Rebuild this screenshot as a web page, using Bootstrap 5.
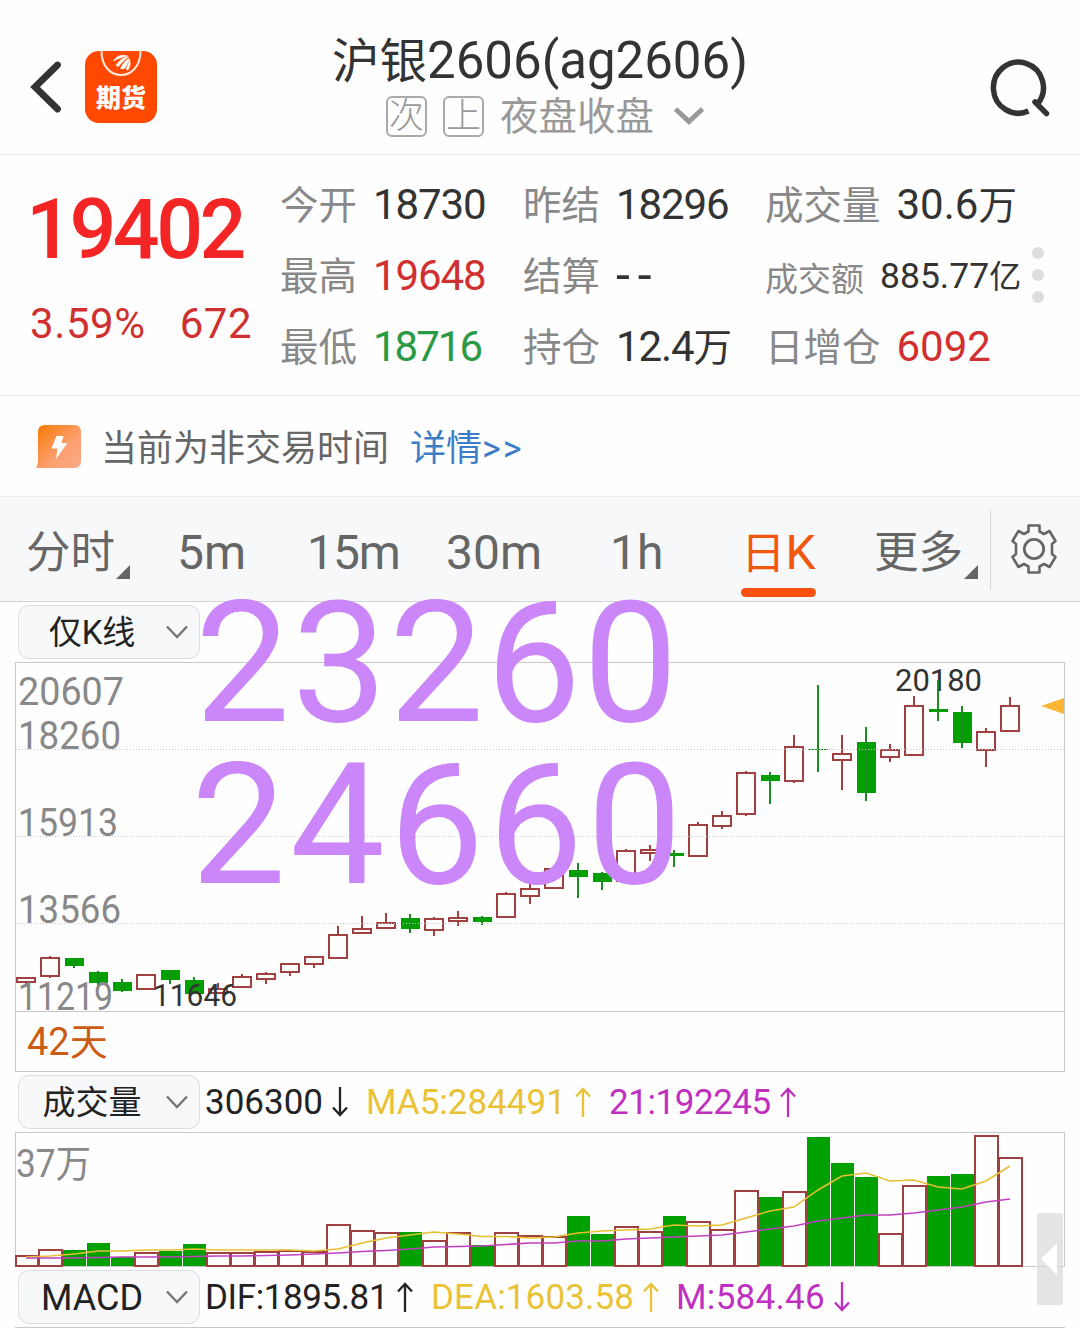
<!DOCTYPE html>
<html lang="zh-CN">
<head>
<meta charset="utf-8">
<meta name="viewport" content="width=device-width, initial-scale=1">
<title>沪银2606(ag2606)</title>
<link rel="stylesheet" href="https://cdn.jsdelivr.net/npm/bootstrap@5.3.0/dist/css/bootstrap.min.css">
<style>
body{font-family:Roboto,"Noto Sans CJK SC",sans-serif;color:#333;background:#fefefe;width:1080px;height:1328px;overflow:hidden;line-height:1}
svg{display:block;flex:none;overflow:visible}
.topbar{height:155px;border-bottom:1px solid #ebebeb}
.side-l{width:200px;padding:51px 0 0 28px}
.side-r{width:200px;padding:57px 29px 0 0}
.ttl{font-size:51px;line-height:60px;height:60px;margin-top:31px}
.ttl .zh{font-size:47.5px}
.substat{color:#999;font-size:38.5px;height:44px;margin-top:3px;padding-left:10px}
.substat .word{padding-top:3px}
.tagbox{width:41px;height:41px;border:2px solid #aaa;border-radius:6px;font-size:35px;font-weight:300}
.quote{height:241px;border-bottom:1px solid #ebebeb}
.pricecol{width:280px;padding:38px 0 0 26px}
.price{font-size:82.5px;font-weight:500;color:#f32525;line-height:74px;letter-spacing:-3.5px}
.chg{font-size:42px;color:#d03030;margin:36px 0 0 4px;line-height:42px;gap:34px;letter-spacing:.6px}
.stats{display:grid;grid-template-columns:243px 242px 255px;grid-template-rows:71px 71px 71px;padding-top:14px}
.stat{gap:16px;font-size:42px;white-space:nowrap}
.lb{color:#888;font-size:38.5px;padding-top:4px}
.stat .zh{font-size:38.5px}
.narrow{letter-spacing:-1.1px}
.narrower{letter-spacing:-2px}
.dash{font-size:50px;letter-spacing:8px;padding-bottom:2px}
.stat.tight{font-size:35.5px;padding-top:3px}
.stat.tight .lb,.stat.tight .zh{font-size:33px}
.stat.tight .zh{font-size:32px}
.up{color:#d03030}.down{color:#2c9a45}
.dots{width:12px;padding-top:92px;gap:10px;margin-left:12px}
.dots i{width:12px;height:12px;border-radius:50%;background:#ddd}
.notice{height:100px;padding-left:36px;font-size:36px;color:#666}
.notice .msg{margin-left:20px;padding-top:5px}
.notice a{color:#3d7dc8;text-decoration:none;margin-left:21px;padding-top:5px}
.notice .gt{letter-spacing:2px}
.tabs{height:106px;background:#f7f8fa;border-top:1px solid #e8eaec;border-bottom:1px solid #d2d5d8;color:#666;font-size:48px}
.tabgrid{display:grid;grid-template-columns:151px 130px 139px 164px 132px 132px 115px;padding-left:26px;width:990px;line-height:56px;padding-top:28px}
.tabgrid .zh{font-size:44.5px}
.tabgrid>div{white-space:nowrap;height:72px}
.tri{width:0;height:0;border-left:14px solid transparent;border-bottom:14px solid #666;align-self:flex-end;margin:0 0 18px 1px}
.on{color:#f2560f}
.on::after{content:"";display:block;width:75px;height:9px;border-radius:5px;background:#fa5010;margin:6px 0 0 -1px}
.vline{width:1px;height:81px;background:#d5d7da;margin-top:12px}
.gear{margin:27px 0 0 19px}
.indi{height:60px;padding-left:18px;font-size:35px;color:#222;gap:5px}
.pick{width:182px;height:54px;border:1px solid #d9dce0;border-radius:11px;background:#f7f8fa;color:#222}
.pick span{width:146px;text-align:center;font-size:33px;padding-top:1px}
.pick .latin{font-size:36px}
.indi .val{gap:9px;white-space:nowrap}
.c-y{color:#e9c236}.c-m{color:#c030c0}
.frame{margin-left:15px;width:1050px;border:1px solid #c8c8c8;border-bottom:0}
.days{height:60px;color:#cc5c14;font-size:38px;padding-left:11px;border-bottom:1px solid #c8c8c8}
.overlay{position:absolute;left:0;top:580px;z-index:3;pointer-events:none}
.handle{position:absolute;left:1037px;top:1213px;z-index:4}
</style>
<script src="https://cdn.jsdelivr.net/npm/bootstrap@5.3.0/dist/js/bootstrap.bundle.min.js"></script>
</head>
<body class="position-relative">
<header class="topbar d-flex justify-content-between">
  <div class="side-l d-flex">
    <svg width="57" height="72" viewBox="28 51 57 72"><path d="M57.500 65L35 87L57.500 109" fill="none" stroke="#333" stroke-width="6.800" stroke-linecap="round"/></svg>
    <svg width="72" height="72" viewBox="0 0 72 72"><rect width="72" height="72" rx="14" fill="#ff4800"/><path d="M16.500 0c0 32 39 32 39 0" fill="none" stroke="#ffe9e0" stroke-width="2"/><path d="M28.500 10C31 5.500 36 3 42.500 5C36.500 6 32 8 28.500 10ZM31 14.500C34 9.500 38 6.500 43.500 6C39 9 36 12 33.500 15.500ZM35.500 17.500C37.500 13 40.500 9 44 7.500C43 12 41 15.500 39 18ZM41 18C43 14 44 11 44.300 8C46 12 45 16 43 19Z" fill="#fff" stroke="#fff" stroke-width=".6"/><text x="36" y="56" text-anchor="middle" font-size="25" font-weight="900" font-family="Noto Sans CJK SC,sans-serif" fill="#fff">期货</text></svg>
  </div>
  <div class="d-flex flex-column align-items-center">
    <div class="ttl text-nowrap"><span class="zh">沪银</span>2606(ag2606)</div>
    <div class="substat d-flex align-items-center">
      <span class="tagbox d-flex align-items-center justify-content-center">次</span>
      <span class="tagbox d-flex align-items-center justify-content-center ms-3 me-3">上</span>
      <span class="word">夜盘收盘</span>
      <svg style="margin-left:20px" width="30" height="20" viewBox="0 0 30 20"><path d="M1.500 3L15 15.500L28.500 3" fill="none" stroke="#999" stroke-width="5"/></svg>
    </div>
  </div>
  <div class="side-r d-flex justify-content-end">
    <svg width="60" height="62" viewBox="991 56.500 60 62"><path d="M1028.500 110.500A25 25.500 0 1 1 1038 103" fill="none" stroke="#333" stroke-width="5.500"/><path d="M1035 101.500L1046.500 113" stroke="#333" stroke-width="5.500" stroke-linecap="round"/></svg>
  </div>
</header>

<section class="quote d-flex">
  <div class="pricecol">
    <div class="price">19402</div>
    <div class="chg d-flex"><span>3.59%</span><span>672</span></div>
  </div>
  <div class="stats">
    <div class="stat d-flex align-items-center"><span class="lb">今开</span><span class="narrow">18730</span></div>
    <div class="stat d-flex align-items-center"><span class="lb">昨结</span><span class="narrow">18296</span></div>
    <div class="stat d-flex align-items-center"><span class="lb">成交量</span><span>30.6<span class="zh">万</span></span></div>
    <div class="stat d-flex align-items-center"><span class="lb">最高</span><span class="up narrow">19648</span></div>
    <div class="stat d-flex align-items-center"><span class="lb">结算</span><span class="dash">--</span></div>
    <div class="stat tight d-flex align-items-center"><span class="lb">成交额</span><span>885.77<span class="zh">亿</span></span></div>
    <div class="stat d-flex align-items-center"><span class="lb">最低</span><span class="down narrower">18716</span></div>
    <div class="stat d-flex align-items-center"><span class="lb">持仓</span><span class="narrow">12.4<span class="zh">万</span></span></div>
    <div class="stat d-flex align-items-center"><span class="lb">日增仓</span><span class="up">6092</span></div>
  </div>
  <div class="dots d-flex flex-column"><i></i><i></i><i></i></div>
</section>

<section class="notice d-flex align-items-center">
  <svg width="45" height="43" viewBox="0 0 45 43"><defs><linearGradient id="flash" x1="0" y1="0" x2="1" y2="1"><stop offset="0" stop-color="#f97800"/><stop offset=".6" stop-color="#fba070"/><stop offset="1" stop-color="#fba98a"/></linearGradient></defs><path d="M9 0H38Q45 0 45 7V36Q45 43 38 43H0Q2 40 2 34V7Q2 0 9 0Z" fill="url(#flash)"/><path d="M20.500 11H27.500L25.500 18H31.500L20 34L21.500 23.500H15.500Z" fill="#fff"/></svg>
  <span class="msg">当前为非交易时间</span><a href="#">详情<span class="gt">&gt;&gt;</span></a>
</section>

<nav class="tabs d-flex">
  <div class="tabgrid">
    <div class="d-flex"><span class="zh">分时</span><i class="tri"></i></div>
    <div>5m</div><div class="narrow">15m</div><div>30m</div><div>1h</div>
    <div class="on"><span class="zh" style="margin-left:-1px">日</span>K</div>
    <div class="d-flex"><span class="zh">更多</span><i class="tri"></i></div>
  </div>
  <div class="vline"></div>
  <svg class="gear" width="48" height="50" viewBox="-24 -25 48 50"><path d="M-5.500 -23.500H5.500V-17.500L10 -15L15.500 -18L21.500 -8L18 -5V5L21.500 8L15.500 18L10 15L5.500 17.500V23.500H-5.500V17.500L-10 15L-15.500 18L-21.500 8L-18 5V-5L-21.500 -8L-15.500 -18L-10 -15L-5.500 -17.500Z" fill="none" stroke="#666" stroke-width="2.600" stroke-linejoin="round"/><circle r="9.700" fill="none" stroke="#666" stroke-width="2.800"/></svg>
</nav>

<main>
  <div class="indi d-flex align-items-center">
    <div class="pick d-flex align-items-center"><span>仅K线</span><svg width="24" height="16" viewBox="0 0 24 16"><path d="M2 2.500L12 13L22 2.500" fill="none" stroke="#777" stroke-width="2.500"/></svg></div>
  </div>
  <div class="frame"><svg id="kline" width="1048" height="348" viewBox="16 663 1048 348"></svg></div>
  <div class="frame"><div class="days d-flex align-items-center">42天</div></div>
  <div class="indi d-flex align-items-center">
    <div class="pick d-flex align-items-center"><span>成交量</span><svg width="24" height="16" viewBox="0 0 24 16"><path d="M2 2.500L12 13L22 2.500" fill="none" stroke="#777" stroke-width="2.500"/></svg></div>
    <div class="val d-flex align-items-center" style="width:156px">306300<svg width="16" height="30" viewBox="0 0 16 30"><path d="M8 0V28M1 20.500L8 28L15 20.500" fill="none" stroke="currentColor" stroke-width="2.300"/></svg></div>
    <div class="val c-y d-flex align-items-center" style="width:238px">MA5:284491<svg width="16" height="30" viewBox="0 0 16 30"><path d="M8 30V2M1 9.500L8 2L15 9.500" fill="none" stroke="currentColor" stroke-width="2.300"/></svg></div>
    <div class="val c-m d-flex align-items-center" style="letter-spacing:-.45px">21:192245<svg width="16" height="30" viewBox="0 0 16 30"><path d="M8 30V2M1 9.500L8 2L15 9.500" fill="none" stroke="currentColor" stroke-width="2.300"/></svg></div>
  </div>
  <div class="frame"><svg id="volume" width="1048" height="134" viewBox="16 1133 1048 134"></svg></div>
  <div class="indi d-flex align-items-center">
    <div class="pick d-flex align-items-center"><span class="latin">MACD</span><svg width="24" height="16" viewBox="0 0 24 16"><path d="M2 2.500L12 13L22 2.500" fill="none" stroke="#777" stroke-width="2.500"/></svg></div>
    <div class="val d-flex align-items-center" style="width:221px;letter-spacing:-.4px">DIF:1895.81<svg width="16" height="30" viewBox="0 0 16 30"><path d="M8 30V2M1 9.500L8 2L15 9.500" fill="none" stroke="currentColor" stroke-width="2.300"/></svg></div>
    <div class="val c-y d-flex align-items-center" style="width:240px;letter-spacing:.15px">DEA:1603.58<svg width="16" height="30" viewBox="0 0 16 30"><path d="M8 30V2M1 9.500L8 2L15 9.500" fill="none" stroke="currentColor" stroke-width="2.300"/></svg></div>
    <div class="val c-m d-flex align-items-center" style="letter-spacing:.3px">M:584.46<svg width="16" height="30" viewBox="0 0 16 30"><path d="M8 0V28M1 20.500L8 28L15 20.500" fill="none" stroke="currentColor" stroke-width="2.300"/></svg></div>
  </div>
  <div class="frame"></div>
</main>

<svg class="overlay" width="720" height="320" viewBox="0 580 720 320" font-family="Roboto,sans-serif" font-size="169" font-weight="400" fill="#cb86f9">
  <text x="195" y="720.500" textLength="483">23260</text>
  <text x="191" y="882.500" textLength="491">24660</text>
</svg>
<svg class="handle" width="26" height="92" viewBox="0 0 26 92"><rect width="26" height="92" rx="2" fill="#d9d9d9" fill-opacity=".72"/><path d="M4 46L20 30V62Z" fill="#fff"/></svg>

<script>
const RED='#a04040',GREEN='#00a000';
// colour, body top, body bottom, wick high, wick low
const candles=[['r',977,983,977,985],['r',957,977,956,978],['g',958,966,958,968],['g',972,983,971,986],['g',982,991,979,992],['r',974,990,974,990],['g',970,980,970,984],['g',980,994,977,994],['r',988,994,983,994],['r',976,988,974,988],['r',973,980,972,984],['r',963,973,963,976],['r',956,965,956,968],['r',934,959,926,959],['r',928,934,916,934],['r',922,929,913,929],['g',918,929,914,933],['r',918,931,917,936],['r',917,922,911,926],['g',917,922,916,925],['r',893,918,892,918],['r',888,897,883,904],['r',868,889,868,889],['g',870,877,863,898],['g',873,882,872,890],['r',850,882,849,882],['r',849,854,845,861],['g',853,856,850,867],['r',824,857,822,857],['r',815,827,811,829],['r',772,815,771,816],['g',775,781,772,804],['r',746,782,735,783],['g',749,750,685,772],['r',753,761,735,790],['g',742,793,727,801],['r',749,758,744,762],['r',705,756,696,756],['g',709,712,680,721],['g',712,743,706,748],['r',731,751,728,767],['r',705,732,697,732]];
const label=(x,y,t,s,c,l)=>`<text x="${x}" y="${y}" font-size="${s}" fill="${c}" textLength="${l}" lengthAdjust="spacingAndGlyphs">${t}</text>`;
let k=label(895,691,'20180',31,'#333',87);
candles.forEach(([c,t,b,h,l],i)=>{
  const x=26+24*i,left=Math.max(x-9,17);
  if(c==='g'){k+=`<rect x="${x-9}" y="${t}" width="19" height="${b-t}" fill="${GREEN}"/><rect x="${x-1}" y="${h}" width="2" height="${l-h}" fill="#1f8a25"/>`;}
  else{k+=`<rect x="${left}" y="${t+1}" width="${x+9-left}" height="${b-t-2}" fill="none" stroke="${RED}" stroke-width="2"/><rect x="${x-1}" y="${h}" width="2" height="${t-h}" fill="${RED}"/><rect x="${x-1}" y="${b}" width="2" height="${l-b}" fill="${RED}"/>`;}
});
[749,836,923].forEach(y=>k+=`<path d="M16 ${y}.500H1064" stroke="#ccc" stroke-dasharray="1 2"/>`);
[['20607',705,106],['18260',749,103],['15913',836,100],['13566',923,103],['11219',1010,95]].forEach(([t,y,l])=>k+=label(18,y,t,38,'#888',l));
k+=label(153,1006,'11646',31,'#333',84)+'<path d="M1041 706L1064 698V714Z" fill="#fbb534"/>';
document.getElementById('kline').innerHTML=k;

const vol=[1255,1249,1250,1243,1257,1252,1251,1244,1252,1252,1251,1250,1251,1224,1230,1232,1232,1240,1232,1245,1232,1235,1236,1216,1234,1226,1231,1216,1221,1229,1190,1197,1191,1137,1163,1177,1233,1185,1176,1174,1135,1157];
// the bar at index 34 closed lower although its candle body is drawn as a rise
const volGreen=i=>i===34||candles[i][0]==='g';
const ma5=[1257,1256,1254,1251,1251,1250,1250,1249,1250,1250,1250,1250,1251,1249,1243,1238,1235,1232,1234,1236.5,1236.5,1238,1237,1233,1231,1230,1229,1225,1226,1225,1218,1211,1207,1190,1176,1173,1181,1180,1187,1189,1181,1166];
const ma21=[1258,1258,1258,1257.5,1257,1257,1257,1256.5,1256,1256,1255.5,1255,1254,1253,1251.5,1250.5,1249,1247,1246.5,1246,1244.5,1243,1243,1241,1241,1239,1238,1237,1236,1235,1232,1229,1226,1221,1218,1215,1215,1213,1210,1207,1202,1199];
let v='<path d="M16 1266.500H1064" stroke="#c8c8c8"/>';
vol.forEach((t,i)=>{
  const x=Math.max(14+24*i,15),w=14+24*i+24-x-1;
  v+=volGreen(i)?`<rect x="${x+1}" y="${t}" width="23" height="${1266-t}" fill="${GREEN}"/>`:`<rect x="${x+1}" y="${t+1}" width="${w}" height="${1265-t}" fill="none" stroke="${RED}" stroke-width="2"/>`;
});
const line=(a,c)=>`<polyline points="${a.map((y,i)=>(26+24*i)+','+y).join(' ')}" fill="none" stroke="${c}" stroke-width="1.500"/>`;
v+=line(ma5,'#e6c030')+line(ma21,'#c040c0')+label(16,1177,'37万',38,'#888',75);
document.getElementById('volume').innerHTML=v;
</script>
</body>
</html>
